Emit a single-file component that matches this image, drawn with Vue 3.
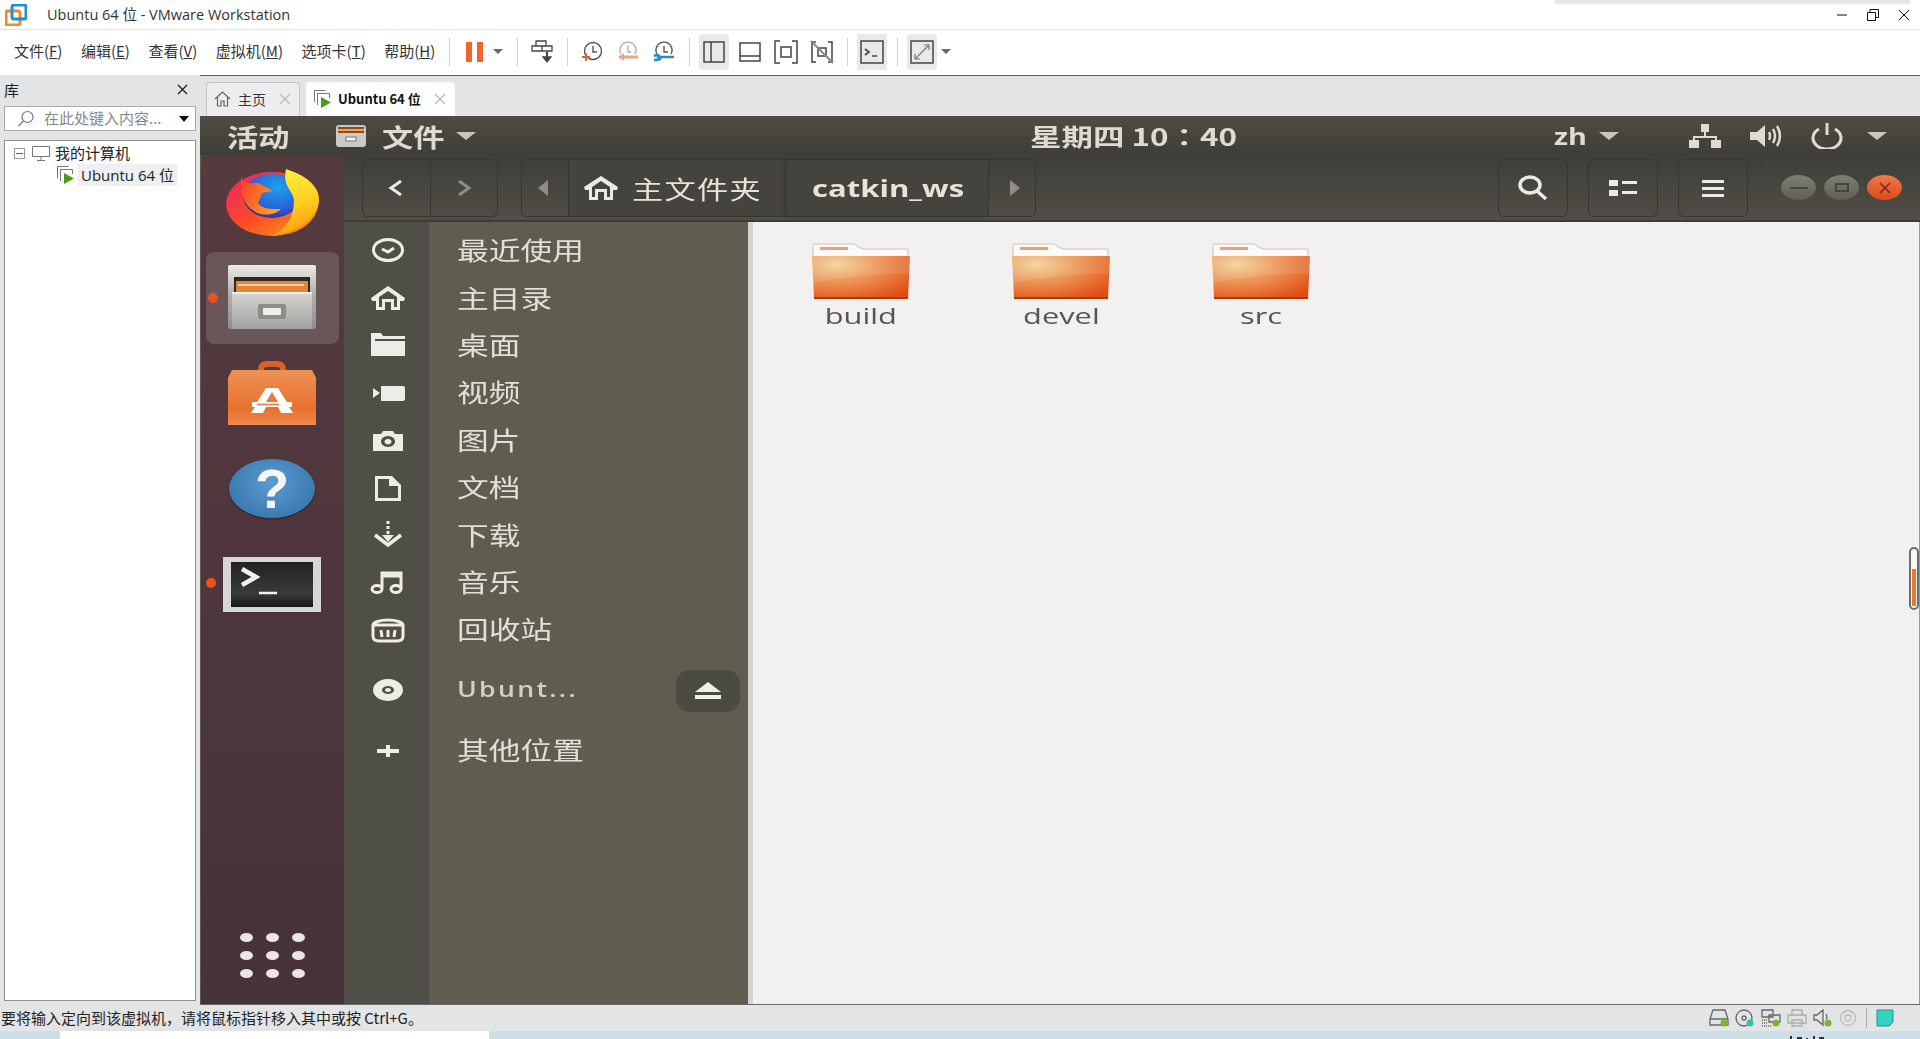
<script setup>
const menus = [
  { t: "文件", k: "F" }, { t: "编辑", k: "E" }, { t: "查看", k: "V" },
  { t: "虚拟机", k: "M" }, { t: "选项卡", k: "T" }, { t: "帮助", k: "H" },
];

// 侧栏图标: f 为填充路径, s 为描边路径
const places = [
  { label: "最近使用", s: "M3.5 13a14.5 10.5 0 1 0 29 0a14.5 10.5 0 1 0 -29 0M12 12l6 3 6-4", sw: 3 },
  { label: "主目录", f: "M18 2 35 14l-1 3H30v9H21v-8h-6v8H6v-9H2l-1-3zM18 7 9 13v10h3v-8h12v8h3V13z" },
  { label: "桌面", f: "M1 2h10l2 3h22v3H5v2h30v15H1z" },
  { label: "视频", f: "M11 7h22a2 2 0 0 1 2 2v11a2 2 0 0 1-2 2H11zM3 9l7 5-7 5z" },
  { label: "图片", f: "M3 8h8l2-3h10l2 3h8v17H3zM18 10a7 5.5 0 1 0 .01 0zM18 13a3.500 2.700 0 1 1-.01 0z" },
  { label: "文档", f: "M5 2h17l9 9v16H5zM8 5v19h20V12h-9V5z" },
  { label: "下载", f: "M16.500 0h3v3h-3zM16.500 5h3v3h-3zM16.500 10h3v3h-3zM12 14h12l-6 7z", s: "M5 14l13 10 13-10", sw: 3.500 },
  { label: "音乐", s: "M12 21V5h19v16M12 8h19M2 21a5 3.500 0 1 0 10 0a5 3.500 0 1 0-10 0M21 21a5 3.500 0 1 0 10 0a5 3.500 0 1 0-10 0", sw: 3 },
  { label: "回收站", s: "M3 9a15 5 0 0 1 30 0v11q0 5-6 5H9q-6 0-6-5zM3 9h30M11 14l1 7M18 14v7M25 14l-1 7", sw: 3 },
];

const folders = ["build", "devel", "src"];
</script>

<template>
  <div class="app">
    <div class="shadow"></div>

    <header class="titlebar">
      <svg class="logo" viewBox="0 0 22 22">
        <rect x="1" y="7" width="14" height="14" rx="2" fill="none" stroke="#f08a24" stroke-width="3" />
        <rect x="7" y="1" width="14" height="14" rx="2" fill="none" stroke="#1f8fd6" stroke-width="3" />
      </svg>
      <span class="title">Ubuntu 64 位 - VMware Workstation</span>
      <div class="winctl">
        <svg width="10" height="10" viewBox="0 0 10 10"><path d="M0 5h10" stroke="#111" /></svg>
        <svg width="12" height="12" viewBox="0 0 12 12"><path d="M.5 3.500h8v8h-8zM3 3.500V.5h8.500v8H8.500" fill="none" stroke="#111" /></svg>
        <svg width="10" height="10" viewBox="0 0 10 10"><path d="M0 0l10 10M10 0L0 10" stroke="#111" /></svg>
      </div>
    </header>

    <nav class="toolbar">
      <div class="menus">
        <span v-for="m in menus" :key="m.k">{{ m.t }}(<u>{{ m.k }}</u>)</span>
      </div>
      <i class="sep first"></i>
      <div class="tool"><span class="pause"></span><span class="pause"></span></div>
      <div class="drop"></div>
      <i class="sep"></i>
      <div class="tool">
        <svg width="22" height="24" viewBox="0 0 22 24" fill="none" stroke="#444" stroke-width="1.300"><path d="M5 1h10v5H5zM1 6h10v5H1zM11 6h10v5H11z" /><path d="M16 12v6" stroke-width="2" /><path d="M12 17h8l-4 5z" fill="#444" /></svg>
      </div>
      <i class="sep"></i>
      <div class="tool">
        <svg width="22" height="22" viewBox="0 0 22 22" fill="none" stroke="#555" stroke-width="1.400"><circle cx="12" cy="10" r="8.500" /><path d="M12 5v6h4" /><path d="M1 16h8M5 12v8" stroke="#d2642e" stroke-width="1.800" /></svg>
      </div>
      <div class="tool">
        <svg width="22" height="22" viewBox="0 0 22 22" fill="none" stroke="#aaa" stroke-width="1.300"><path d="M4 13a8 8 0 1 1 14 0" /><path d="M11 5v6h3" /><path d="M2 16h19" stroke="#f3a27a" stroke-width="3" /><path d="M7 12l-5 4 5 4z" fill="#f3a27a" stroke="none" /></svg>
      </div>
      <div class="tool">
        <svg width="22" height="22" viewBox="0 0 22 22" fill="none" stroke="#555" stroke-width="1.400"><path d="M4 13a8 8 0 1 1 14 0" /><path d="M11 5v6h4" /><path d="M4 16h17M1 15q4-2 6 1t-6 3" stroke="#2d8ccc" stroke-width="2.600" /></svg>
      </div>
      <i class="sep"></i>
      <div class="tool on">
        <svg width="22" height="22" viewBox="0 0 22 22" fill="none" stroke="#444" stroke-width="1.500"><path d="M1 1h20v20H1zM8 1v20" /></svg>
      </div>
      <div class="tool">
        <svg width="22" height="22" viewBox="0 0 22 22" fill="none" stroke="#444" stroke-width="1.500"><path d="M1 2h20v18H1zM1 15h20" /></svg>
      </div>
      <div class="tool">
        <svg width="24" height="24" viewBox="0 0 24 24" fill="none" stroke="#444" stroke-width="1.500"><path d="M6 1H1v22h5M18 1h5v22h-5M7 7h10v10H7z" /></svg>
      </div>
      <div class="tool">
        <svg width="24" height="24" viewBox="0 0 24 24" fill="none" stroke="#444" stroke-width="1.500"><path d="M6 2H2v20h4M18 2h4v20h-4M8 8h8v8H8z" /><path d="M1 1l22 22" stroke="#888" stroke-width="2" /></svg>
      </div>
      <i class="sep"></i>
      <div class="tool on">
        <svg width="24" height="24" viewBox="0 0 24 24" fill="none" stroke="#444" stroke-width="1.500"><path d="M1 1h22v22H1z" /><path d="M5 9l4 3-4 3M12 16h5" stroke-width="1.600" /></svg>
      </div>
      <i class="sep"></i>
      <div class="tool on">
        <svg width="24" height="24" viewBox="0 0 24 24" fill="none" stroke="#444" stroke-width="1.500"><path d="M1 1h22v22H1z" /><path d="M14 5h5v5M19 5L5 19M5 14v5h5" stroke="#777" stroke-width="1.200" /></svg>
      </div>
      <div class="drop"></div>
    </nav>

    <div class="main">
      <aside class="library">
        <div class="lib-head">
          <span>库</span>
          <svg width="11" height="11" viewBox="0 0 11 11"><path d="M1 1l9 9M10 1l-9 9" stroke="#222" stroke-width="1.400" /></svg>
        </div>
        <div class="lib-search">
          <svg width="18" height="18" viewBox="0 0 18 18" fill="none" stroke="#777" stroke-width="1.200"><circle cx="10.500" cy="7" r="5.500" /><path d="M6.500 11L1.500 16" /></svg>
          <span>在此处键入内容...</span>
          <b></b>
        </div>
        <div class="tree">
          <div class="tree-row">
            <span class="minus"></span>
            <svg width="18" height="15" viewBox="0 0 18 15" fill="none" stroke="#777"><path d="M.5.5h17v10H.5zM9 11v3M5 14.500h8" /></svg>
            <span>我的计算机</span>
          </div>
          <div class="tree-row child">
            <svg width="18" height="18" viewBox="0 0 18 18"><path d="M.5 12V.5h11M3.500 15V3.500h12V8" fill="none" stroke="#777" /><path d="M7 7v11l10-5.500z" fill="#4a9c18" /></svg>
            <span class="vm-name">Ubuntu 64 位</span>
          </div>
        </div>
      </aside>

      <section class="workspace">
        <div class="tabs">
          <div class="tab">
            <svg width="17" height="16" viewBox="0 0 17 16" fill="none" stroke="#666" stroke-width="1.200"><path d="M1 8l7.500-7L16 8M3.500 6.500V15h3.500v-5h3v5h3.500V6.500" /></svg>
            <span>主页</span>
            <svg class="tab-x" width="12" height="12" viewBox="0 0 12 12"><path d="M1 1l10 10M11 1L1 11" stroke="#bbb" stroke-width="1.400" /></svg>
          </div>
          <div class="tab active">
            <svg width="18" height="18" viewBox="0 0 18 18"><path d="M.5 12V.5h11M3.500 15V3.500h12V8" fill="none" stroke="#777" /><path d="M7 7v11l10-5.500z" fill="#4a9c18" /></svg>
            <span>Ubuntu 64 位</span>
            <svg class="tab-x" width="12" height="12" viewBox="0 0 12 12"><path d="M1 1l10 10M11 1L1 11" stroke="#bbb" stroke-width="1.400" /></svg>
          </div>
        </div>

        <div class="guest">
          <div class="panel">
            <span class="wide bold act">活动</span>
            <svg class="app-ic" width="32" height="24" viewBox="0 0 32 24">
              <rect x="1" y="1" width="30" height="22" rx="3" fill="#c9c9c6" />
              <rect x="3" y="3" width="26" height="6" fill="#8c4a22" />
              <rect x="3" y="5" width="26" height="2" fill="#f0a060" />
              <rect x="11" y="13" width="10" height="4" fill="#f4f4f2" stroke="#777" />
            </svg>
            <span class="wide bold files">文件</span>
            <i class="tri big"></i>
            <span class="wide bold clock">星期四 10：40</span>
            <span class="wide bold lang">zh</span>
            <i class="tri"></i>
            <svg class="net" width="34" height="24" viewBox="0 0 34 24" fill="#dedbd3"><path d="M13 0h8v8h-8zM16 8h2v4h11v4h-2v-2H7v2H5v-4h11zM1 16h10v8H1zM23 16h10v8H23z" /></svg>
            <svg class="vol" width="34" height="24" viewBox="0 0 34 24" fill="none" stroke="#dedbd3" stroke-width="2.500"><path d="M1 8h7l8-7v22l-8-7H1z" fill="#dedbd3" stroke="none" /><path d="M20 8q2 4 0 8M24 5q4 7 0 14M28 2q6 10 0 20" /></svg>
            <svg class="pow" width="32" height="26" viewBox="0 0 32 26" fill="none" stroke="#dedbd3" stroke-width="3"><path d="M8 6a14 11 0 1 0 16 0" /><path d="M16 0v12" /></svg>
            <i class="tri end"></i>
          </div>

          <div class="desk">
            <div class="dock">
              <svg class="ff" width="94" height="68" viewBox="0 0 94 68">
                <defs>
                  <linearGradient id="ffBody" x1="0" y1="0" x2="1" y2="1">
                    <stop offset="0" stop-color="#e8206e" />
                    <stop offset=".5" stop-color="#ff4a26" />
                    <stop offset="1" stop-color="#ffa410" />
                  </linearGradient>
                  <radialGradient id="ffGlobe" cx=".6" cy=".3" r=".8">
                    <stop offset="0" stop-color="#19a2ee" />
                    <stop offset=".6" stop-color="#2a62d8" />
                    <stop offset="1" stop-color="#3a1f8e" />
                  </radialGradient>
                  <linearGradient id="ffTail" x1=".3" y1="0" x2=".6" y2="1">
                    <stop offset="0" stop-color="#fff03c" />
                    <stop offset=".55" stop-color="#ffcf22" />
                    <stop offset="1" stop-color="#ff9410" />
                  </linearGradient>
                  <linearGradient id="ffFox" x1="0" y1="0" x2="1" y2=".4">
                    <stop offset="0" stop-color="#ff3a2a" />
                    <stop offset="1" stop-color="#ffa01e" />
                  </linearGradient>
                </defs>
                <ellipse cx="46" cy="35" rx="46" ry="32" fill="url(#ffBody)" />
                <ellipse cx="46" cy="27" rx="29" ry="22" fill="url(#ffGlobe)" />
                <path d="M15 8C18 16 26 14 32 14L47 22L36 24L32 34C36 40 44 40 55 40C50 46 36 48 28 42C18 36 14 24 15 8Z" fill="url(#ffFox)" />
                <path d="M60 0C78 6 94 16 93 32C92 48 76 62 46 67C60 60 68 48 68 32C68 22 56 18 60 0Z" fill="url(#ffTail)" />
              </svg>

              <div class="dock-item running">
                <svg width="90" height="66" viewBox="0 0 90 66">
                  <defs>
                    <linearGradient id="cabTop" x1="0" y1="0" x2="0" y2="1">
                      <stop offset="0" stop-color="#ecece9" />
                      <stop offset=".4" stop-color="#b5b5b2" />
                      <stop offset="1" stop-color="#8d8d8a" />
                    </linearGradient>
                    <linearGradient id="cabFront" x1="0" y1="0" x2="0" y2="1">
                      <stop offset="0" stop-color="#d4d4d1" />
                      <stop offset="1" stop-color="#a2a2a0" />
                    </linearGradient>
                  </defs>
                  <rect x="1" y="0" width="88" height="64" rx="2" fill="url(#cabTop)" />
                  <rect x="7" y="12" width="76" height="16" fill="#2b2826" />
                  <rect x="9" y="16" width="72" height="12" fill="#e88436" />
                  <rect x="11" y="19" width="66" height="2" fill="#f6d0a8" />
                  <rect x="5" y="27" width="80" height="37" fill="url(#cabFront)" />
                  <rect x="5" y="27" width="80" height="2" fill="#efefed" />
                  <rect x="31" y="39" width="28" height="15" rx="2" fill="#8c8c89" />
                  <rect x="36" y="43" width="18" height="7" rx="1" fill="#eeeeec" />
                </svg>
              </div>

              <svg class="store" width="92" height="66" viewBox="0 0 90 66">
                <defs>
                  <linearGradient id="bag" x1="0" y1="0" x2="0" y2="1">
                    <stop offset="0" stop-color="#ef9157" />
                    <stop offset=".7" stop-color="#e8702f" />
                    <stop offset="1" stop-color="#ef8a4e" />
                  </linearGradient>
                </defs>
                <path d="M31 20V10q0-9 9-9h10q9 0 9 9v10h-6V10q0-3-3-3H40q-3 0-3 3v10z" fill="#d9622c" />
                <path d="M5 10h80l4 8v47H1V18z" fill="url(#bag)" />
                <path d="M39 28h12l9 14h5v5h-3l4 6H54l-3-6H39l-3 6H24l4-6h-3v-5h5zM45 32l-6 10h12z" fill="#fff" fill-rule="evenodd" />
                <rect x="30" y="43.500" width="22" height="2" fill="#ef8a4e" />
              </svg>

              <div class="help">
                <span>?</span>
              </div>

              <div class="term running">
                <div class="term-screen">
                  <svg width="60" height="32" viewBox="0 0 60 32" fill="none" stroke="#f2f2f0"><path d="M3 3l14 8-14 8" stroke-width="4.500" /><path d="M20 27h18" stroke-width="2.500" /></svg>
                </div>
              </div>

              <div class="grid-btn">
                <i v-for="n in 9" :key="n"></i>
              </div>
            </div>

            <div class="nautilus">
              <div class="headerbar">
                <div class="nav-group">
                  <div class="seg">
                    <svg width="18" height="18" viewBox="0 0 18 18" fill="none" stroke="#eceae4" stroke-width="3"><path d="M14 2L4 9l10 7" /></svg>
                  </div>
                  <div class="seg">
                    <svg width="18" height="18" viewBox="0 0 18 18" fill="none" stroke="#8f8d86" stroke-width="3"><path d="M4 2l10 7-10 7" /></svg>
                  </div>
                </div>
                <div class="path-group">
                  <div class="seg arrow"><i class="ltri"></i></div>
                  <div class="seg home-seg">
                    <svg width="36" height="24" viewBox="0 0 36 24" fill="#eceae4"><path d="M18 0 35 11l-1 3H30v10H21v-8h-6v8H6V14H2l-1-3zM18 5 9 11v10h3v-8h12v8h3V11z" fill-rule="evenodd" /></svg>
                    <span class="wide path-cjk">主文件夹</span>
                  </div>
                  <div class="seg cur-seg"><span class="wide bold cur">catkin_ws</span></div>
                  <div class="seg arrow end"><i class="rtri"></i></div>
                </div>
                <div class="hb-btn search">
                  <svg width="32" height="26" viewBox="0 0 32 26" fill="none" stroke="#eceae4" stroke-width="3.500"><ellipse cx="13" cy="10" rx="10" ry="8" /><path d="M20 16l9 8" /></svg>
                </div>
                <div class="hb-btn view">
                  <svg width="28" height="16" viewBox="0 0 28 16" fill="#eceae4"><path d="M0 0h9v6H0zM0 10h9v6H0zM13 1h15v3H13zM13 11h15v3H13z" /></svg>
                </div>
                <div class="hb-btn menu">
                  <svg width="24" height="18" viewBox="0 0 24 18" fill="#eceae4"><path d="M1 1h22v3H1zM1 8h22v3H1zM1 15h22v3H1z" /></svg>
                </div>
                <i class="hb-sep"></i>
                <div class="wbtn"><i class="min"></i></div>
                <div class="wbtn"><i class="max"></i></div>
                <div class="wbtn close">
                  <svg width="12" height="12" viewBox="0 0 12 12"><path d="M1 1l10 10M11 1L1 11" stroke="#7a2a12" stroke-width="1.600" /></svg>
                </div>
              </div>

              <div class="body">
                <div class="sidebar">
                  <div class="place" v-for="p in places" :key="p.label">
                    <div class="place-ic">
                      <svg width="36" height="28" viewBox="0 0 36 28">
                        <path v-if="p.f" :d="p.f" fill="#eeece6" fill-rule="evenodd" />
                        <path v-if="p.s" :d="p.s" fill="none" stroke="#eeece6" :stroke-width="p.sw" />
                      </svg>
                    </div>
                    <span class="wide place-label">{{ p.label }}</span>
                  </div>
                  <div class="place mounted">
                    <div class="place-ic">
                      <svg width="36" height="28" viewBox="0 0 36 28">
                        <path d="M18 3a15 11 0 1 0 .01 0zM18 10a6 4 0 1 1-.01 0zM18 12a3 2 0 1 0 .01 0z" fill="#eeece6" fill-rule="evenodd" />
                      </svg>
                    </div>
                    <span class="wide place-label ubunt">Ubunt...</span>
                    <div class="eject">
                      <svg width="28" height="18" viewBox="0 0 28 18" fill="#f2f0ea"><path d="M14 0l13 10H1zM1 13h26v4H1z" /></svg>
                    </div>
                  </div>
                  <div class="place other">
                    <div class="place-ic">
                      <svg width="36" height="28" viewBox="0 0 36 28"><path d="M7 14h22M18 8v12" stroke="#eeece6" stroke-width="4" /></svg>
                    </div>
                    <span class="wide place-label">其他位置</span>
                  </div>
                </div>

                <div class="files-view">
                  <div class="file" v-for="f in folders" :key="f">
                    <svg width="100" height="56" viewBox="0 0 100 56">
                      <defs>
                        <radialGradient id="fold" cx=".25" cy=".2" r=".95">
                          <stop offset="0" stop-color="#f5cf97" />
                          <stop offset=".4" stop-color="#ec9a5a" />
                          <stop offset="1" stop-color="#e34e14" />
                        </radialGradient>
                      </defs>
                      <path d="M3 1h40l8 5h46v10H2V2z" fill="#fbfaf8" stroke="#c9c5c0" />
                      <rect x="9" y="4" width="28" height="3" fill="#f0a070" />
                      <path d="M1 13h98l-2 42H3z" fill="url(#fold)" />
                      <path d="M1 13h98l-1 18Q50 30 2 40z" fill="#fff" opacity=".1" />
                      <path d="M3 54h94v2H3z" fill="#a83a10" />
                    </svg>
                    <span class="wide file-name">{{ f }}</span>
                  </div>
                </div>
              </div>
            </div>
          </div>

          <div class="slider"><i></i></div>
        </div>
      </section>
    </div>

    <footer class="status">
      <span>要将输入定向到该虚拟机，请将鼠标指针移入其中或按 Ctrl+G。</span>
      <div class="devices">
        <svg width="20" height="18" viewBox="0 0 20 18" fill="none" stroke="#666" stroke-width="1.300"><path d="M4 1h12l3 9v6H1v-6zM1 10h18" /><circle cx="15" cy="14" r="3.500" fill="#7cb82f" stroke="none" /></svg>
        <svg width="20" height="18" viewBox="0 0 20 18" fill="none" stroke="#666" stroke-width="1.300"><circle cx="9" cy="9" r="8" /><circle cx="9" cy="9" r="2" /><circle cx="15" cy="14" r="3.500" fill="#2fc4b2" stroke="none" /></svg>
        <svg width="20" height="18" viewBox="0 0 20 18" fill="none" stroke="#666" stroke-width="1.300"><path d="M1 1h11v7H1zM8 6h11v7H8z" /><path d="M1 11h5M1 14h5M1 17h9" stroke-dasharray="1 1" /><circle cx="15" cy="14" r="3.500" fill="#7cb82f" stroke="none" /></svg>
        <svg width="20" height="18" viewBox="0 0 20 18" fill="none" stroke="#aaa" stroke-width="1.300"><path d="M5 6V1h10v5M1 6h18v8H1zM5 11h10v6H5z" /></svg>
        <svg width="20" height="18" viewBox="0 0 20 18" fill="none" stroke="#666" stroke-width="1.300"><path d="M1 6h3l6-5v15l-6-5H1zM13 5q2 3 0 5" /><circle cx="15" cy="14" r="3.500" fill="#7cb82f" stroke="none" /></svg>
        <svg width="18" height="18" viewBox="0 0 18 18" fill="none" stroke="#bbb" stroke-width="1.300"><circle cx="9" cy="9" r="7.500" /><circle cx="9" cy="9" r="3" /></svg>
        <i class="dev-sep"></i>
        <svg width="18" height="18" viewBox="0 0 18 18"><path d="M1 1h16v12l-4 4H1z" fill="#33d4c0" stroke="#2b8f86" /></svg>
      </div>
    </footer>

    <div class="strip">
      <div class="strip-page"></div>
      <svg class="strip-marks" width="36" height="3" viewBox="0 0 36 3" fill="#333"><path d="M1 0h2v3H1zM8 1h5v2H8zM17 2h2v1h-2zM24 0h2v3h-2zM30 1h5v2h-5z" /></svg>
    </div>
  </div>
</template>

<style>
html, body {
  margin: 0;
  background: #fff;
}
</style>

<style scoped>
.app {
  position: relative;
  width: 1920px;
  height: 1039px;
  display: flex;
  flex-direction: column;
  overflow: hidden;
  font-family: "Noto Sans CJK SC", "Liberation Sans", sans-serif;
  font-size: 14px;
  color: #222;
}
.shadow {
  position: absolute;
  left: 1555px;
  top: 0;
  width: 355px;
  height: 2px;
  background: #e4e4e4;
  box-shadow: 0 1px 3px #ccc;
}
.titlebar {
  height: 29px;
  flex: none;
  box-sizing: content-box;
  display: flex;
  align-items: center;
  border-bottom: 1px solid #e3e3e3;
  background: #fff;
  padding-left: 5px;
}
.logo {
  width: 22px;
  height: 22px;
}
.title {
  margin-left: 20px;
  margin-top: -2px;
  font-family: "Open Sans", "Noto Sans CJK SC", sans-serif;
  font-size: 14.500px;
  color: #333;
}
.winctl {
  margin-left: auto;
  display: flex;
  align-items: center;
  gap: 20px;
  padding-right: 11px;
}
.toolbar {
  height: 45px;
  flex: none;
  box-sizing: border-box;
  padding-bottom: 2px;
  display: flex;
  align-items: center;
  background: #fff;
}
.menus {
  width: 449px;
  box-sizing: border-box;
  padding-left: 14px;
  margin-top: -2px;
  display: flex;
  gap: 18.500px;
  color: #333;
  font-size: 15px;
}
.menus span {
  white-space: nowrap;
}
.sep {
  width: 1px;
  height: 28px;
  background: #d3d3d3;
  margin: 0 6px 0 7px;
}
.sep.first {
  margin-left: 0;
}
.tool {
  width: 36px;
  height: 36px;
  display: flex;
  align-items: center;
  justify-content: center;
  gap: 5px;
  position: relative;
}
.tool.on::before {
  content: "";
  position: absolute;
  left: 3px;
  top: 0;
  width: 30px;
  height: 36px;
  border-radius: 3px;
  background: #e8e9eb;
}
.tool svg {
  position: relative;
}
.pause {
  width: 6px;
  height: 20px;
  background: #f0652b;
}
.drop {
  width: 12px;
  display: flex;
  justify-content: center;
  margin-right: 6px;
}
.drop::after {
  content: "";
  border-left: 5px solid transparent;
  border-right: 5px solid transparent;
  border-top: 5px solid #666;
}
.main {
  flex: 1;
  min-height: 0;
  display: flex;
}
.library {
  width: 200px;
  flex: none;
  box-sizing: border-box;
  background: #e3e4e6;
  padding: 0 4px 4px;
  display: flex;
  flex-direction: column;
  border-top: 1px solid #e3e4e6;
}
.lib-head {
  height: 30px;
  flex: none;
  display: flex;
  align-items: center;
  justify-content: space-between;
  padding-right: 8px;
  padding-bottom: 4px;
  box-sizing: border-box;
  font-size: 15px;
}
.lib-search {
  height: 25px;
  flex: none;
  box-sizing: border-box;
  border: 1px solid #a9a9a9;
  background: #fff;
  display: flex;
  align-items: center;
  padding-left: 12px;
  color: #888;
  margin-bottom: 9px;
}
.lib-search span {
  margin-left: 9px;
  margin-top: -2px;
  font-size: 15px;
}
.lib-search b {
  margin-left: auto;
  margin-right: 6px;
  border-left: 5.500px solid transparent;
  border-right: 5.500px solid transparent;
  border-top: 6px solid #111;
}
.tree {
  flex: 1;
  border: 1px solid #8f8f8f;
  background: #fff;
  padding-top: 1px;
}
.tree-row {
  height: 22px;
  display: flex;
  align-items: center;
  padding-left: 9px;
  gap: 5px;
  font-size: 15px;
  line-height: 20px;
}
.minus {
  width: 9px;
  height: 9px;
  border: 1px solid #999;
  position: relative;
  margin-right: 2px;
}
.minus::after {
  content: "";
  position: absolute;
  left: 1px;
  top: 4px;
  width: 7px;
  height: 1px;
  background: #666;
}
.tree-row.child {
  padding-left: 52px;
  gap: 3px;
}
.vm-name {
  background: #eeeff1;
  padding: 0 3px;
  line-height: 22px;
  font-size: 15px;
  font-family: "Open Sans", "Noto Sans CJK SC", sans-serif;
}
.workspace {
  flex: 1;
  min-width: 0;
  display: flex;
  flex-direction: column;
  border-top: 1px solid #616161;
}
.tabs {
  height: 40px;
  flex: none;
  box-sizing: border-box;
  background: #e3e4e6;
  display: flex;
  align-items: flex-end;
  gap: 6px;
  padding-left: 6px;
}
.tab {
  width: 94px;
  height: 34px;
  box-sizing: border-box;
  background: #ecedef;
  border: 1px solid #c4c5c7;
  border-bottom: none;
  border-radius: 4px 4px 0 0;
  display: flex;
  align-items: center;
  padding-left: 7px;
  padding-bottom: 2px;
  gap: 7px;
  color: #333;
  position: relative;
}
.tab.active {
  width: 149px;
  background: #fff;
  border-color: #fff;
  font-weight: 700;
  font-size: 13px;
  color: #111;
  gap: 6px;
}
.tab-x {
  position: absolute;
  right: 8px;
  top: 10px;
}
.guest {
  flex: 1;
  min-height: 0;
  display: flex;
  flex-direction: column;
  position: relative;
  border-bottom: 1px solid #6b6b6b;
  filter: blur(.35px);
}
.wide {
  display: inline-block;
  transform: scaleX(1.25);
  transform-origin: left center;
  white-space: nowrap;
}
.bold {
  font-weight: 700;
}
.panel {
  height: 39px;
  flex: none;
  background: linear-gradient(#504c44, #3e3d38);
  display: flex;
  align-items: center;
  color: #dedbd3;
  font-size: 25px;
}
.act {
  width: 61px;
  margin-left: 27px;
}
.app-ic {
  margin-left: 47px;
}
.files {
  width: 62px;
  margin-left: 15px;
}
.tri {
  margin-left: 12px;
  border-left: 10.500px solid transparent;
  border-right: 10.500px solid transparent;
  border-top: 8px solid #c9c6be;
}
.clock {
  width: 524px;
  margin-left: 554px;
  font-size: 24px;
  font-family: "Noto Sans CJK TC", sans-serif;
  transform: scaleX(1.31);
}
.lang {
  width: 33px;
  font-size: 23px;
  font-family: "Open Sans", sans-serif;
}
.net {
  margin-left: 69px;
}
.vol {
  margin-left: 27px;
}
.pow {
  margin-left: 28px;
}
.tri.end {
  margin-left: 24px;
}
.desk {
  flex: 1;
  min-height: 0;
  display: flex;
}
.dock {
  width: 144px;
  flex: none;
  background: linear-gradient(#553a3e, #47323a);
  box-shadow: inset 1px 0 #5d5a55;
  display: flex;
  flex-direction: column;
  align-items: center;
  box-sizing: border-box;
}
.ff {
  margin-top: 14px;
  margin-left: 2px;
}
.dock-item {
  width: 133px;
  height: 92px;
  margin-top: 15px;
  background: #6a5559;
  border-radius: 8px;
  display: flex;
  align-items: center;
  justify-content: center;
  position: relative;
}
.running::before {
  content: "";
  position: absolute;
  left: 2px;
  top: 41px;
  width: 10px;
  height: 10px;
  border-radius: 50%;
  background: #e9541c;
}
.store {
  margin-top: 16px;
}
.help {
  width: 86px;
  height: 59px;
  margin-top: 33px;
  border-radius: 50%;
  background: radial-gradient(ellipse at 50% 40%, #5c9bd0, #2f6ea6);
  box-shadow: 0 1px 2px #2d2026;
  display: flex;
  align-items: center;
  justify-content: center;
  color: #f7f7f7;
  font: 700 56px "Liberation Sans", sans-serif;
}
.term {
  width: 98px;
  height: 55px;
  box-sizing: border-box;
  margin-top: 39px;
  padding: 5px 8px;
  background: #d6d6d4;
  position: relative;
  align-self: center;
}
.term.running::before {
  left: -17px;
  top: 21px;
}
.term-screen {
  height: 100%;
  background: linear-gradient(#222, #3a3a3a 70%, #181818);
  box-sizing: border-box;
  padding: 4px 8px;
}
.term-screen svg {
  display: block;
}
.grid-btn {
  margin-top: auto;
  margin-bottom: 26px;
  display: grid;
  grid-template-columns: repeat(3, 13px);
  grid-auto-rows: 9px;
  column-gap: 13px;
  row-gap: 9px;
}
.grid-btn i {
  border-radius: 50%;
  background: #e9e6e4;
}
.nautilus {
  flex: 1;
  min-width: 0;
  display: flex;
  flex-direction: column;
}
.headerbar {
  height: 67px;
  flex: none;
  box-sizing: border-box;
  display: flex;
  align-items: center;
  padding-left: 18px;
  background: linear-gradient(#3e3d38, #504e47);
  border-bottom: 2px solid #3c3b36;
}
.seg {
  display: flex;
  align-items: center;
  justify-content: center;
  height: 100%;
}
.nav-group, .path-group {
  height: 58px;
  display: flex;
  border: 1px solid #36352f;
  border-radius: 6px;
  box-sizing: border-box;
}
.nav-group {
  width: 136px;
}
.nav-group .seg {
  flex: 1;
}
.nav-group .seg:first-child {
  border-right: 1px solid #36352f;
}
.path-group {
  width: 515px;
  margin-left: 23px;
}
.arrow {
  width: 47px;
  flex: none;
  box-sizing: border-box;
  padding-right: 5px;
  border-right: 1px solid #36352f;
}
.arrow.end {
  padding-right: 0;
  padding-left: 6px;
  border-right: none;
  border-left: 1px solid #36352f;
}
.ltri {
  border-top: 8px solid transparent;
  border-bottom: 8px solid transparent;
  border-right: 10px solid #8f8d86;
}
.rtri {
  border-top: 8px solid transparent;
  border-bottom: 8px solid transparent;
  border-left: 10px solid #8f8d86;
}
.home-seg {
  width: 218px;
  flex: none;
  justify-content: flex-start;
  padding-left: 14px;
  box-sizing: border-box;
  background: #45433d;
  color: #e6e3db;
  font-size: 25px;
  gap: 13px;
}
.cur-seg {
  flex: 1;
  justify-content: flex-start;
  padding-left: 25px;
  background: #45433d;
  box-shadow: -2px 0 3px #38372f;
  color: #e6e3db;
  font: 700 23px "Open Sans", sans-serif;
}
.cur {
  transform: scaleX(1.35);
}
.path-cjk {
  width: 100px;
  letter-spacing: 1px;
}
.hb-btn {
  width: 70px;
  height: 58px;
  box-sizing: border-box;
  border: 1px solid #36352f;
  border-radius: 6px;
  display: flex;
  align-items: center;
  justify-content: center;
}
.search {
  margin-left: 462px;
}
.view, .menu {
  margin-left: 20px;
}
.hb-sep {
  width: 1px;
  height: 54px;
  margin: 0 14px 0 18px;
  background: #48473f;
}
.wbtn {
  width: 35px;
  height: 25px;
  border-radius: 50%;
  margin-right: 8px;
  background: linear-gradient(#7e7d76, #5f5e57);
  display: flex;
  align-items: center;
  justify-content: center;
}
.wbtn .min {
  width: 18px;
  height: 2px;
  background: #45443e;
}
.wbtn .max {
  width: 14px;
  height: 9px;
  border: 2px solid #45443e;
  box-sizing: border-box;
}
.wbtn.close {
  background: linear-gradient(#f07a47, #dd4a1a);
}
.body {
  flex: 1;
  min-height: 0;
  display: flex;
}
.sidebar {
  width: 409px;
  flex: none;
  box-sizing: border-box;
  padding-top: 5px;
  background: linear-gradient(90deg, #504f47 85px, #5f5c50 85px);
  border-right: 5px solid #d6d4d0;
}
.place {
  height: 47.400px;
  display: flex;
  align-items: center;
}
.place-ic {
  width: 85px;
  flex: none;
  display: flex;
  justify-content: center;
  padding-left: 3px;
  box-sizing: border-box;
}
.place-label {
  margin-left: 28px;
  margin-top: -3px;
  color: #e2dfd7;
  font-size: 25px;
  transform: scaleX(1.27);
}
.mounted {
  margin-top: 13px;
  position: relative;
}
.ubunt {
  font: 600 21px "Open Sans", sans-serif;
  letter-spacing: 1.800px;
  color: #d2cfc7;
}
.eject {
  position: absolute;
  left: 332px;
  top: 3px;
  width: 64px;
  height: 42px;
  border-radius: 14px;
  background: #4c4b42;
  display: flex;
  align-items: center;
  justify-content: center;
}
.other {
  margin-top: 13px;
}
.files-view {
  flex: 1;
  background: #f3f1ef;
  box-shadow: inset -1px 0 #9a9a9a;
  display: flex;
  align-items: flex-start;
  padding: 21px 0 0 58px;
  gap: 100px;
}
.file {
  width: 100px;
  display: flex;
  flex-direction: column;
  align-items: center;
}
.file-name {
  margin-top: 1px;
  font: 500 22px "Open Sans", sans-serif;
  color: #555;
  transform: scaleX(1.4);
  transform-origin: center;
}
.slider {
  position: absolute;
  right: 1px;
  top: 431px;
  width: 10px;
  height: 63px;
  box-sizing: border-box;
  border: 2px solid #6b6b6b;
  border-radius: 5px;
  background: #f8f8f6;
  display: flex;
  align-items: flex-end;
  justify-content: center;
  padding-bottom: 2px;
}
.slider i {
  width: 4px;
  height: 37px;
  background: #f0752e;
}
.status {
  height: 26px;
  flex: none;
  box-sizing: border-box;
  background: #e3e4e6;
  display: flex;
  align-items: center;
  padding-left: 1px;
  padding-bottom: 1px;
  color: #222;
  font-size: 15px;
}
.devices {
  margin-left: auto;
  padding-right: 26px;
  display: flex;
  align-items: center;
  gap: 6px;
}
.dev-sep {
  width: 1px;
  height: 20px;
  background: #aaa;
  margin: 0 3px;
}
.strip {
  height: 8px;
  flex: none;
  display: flex;
  position: relative;
  overflow: hidden;
  background: #cde0e8;
}
.strip-page {
  width: 429px;
  margin-left: 60px;
  background: #fff;
}
.strip-marks {
  position: absolute;
  left: 1789px;
  bottom: 0;
}
</style>
